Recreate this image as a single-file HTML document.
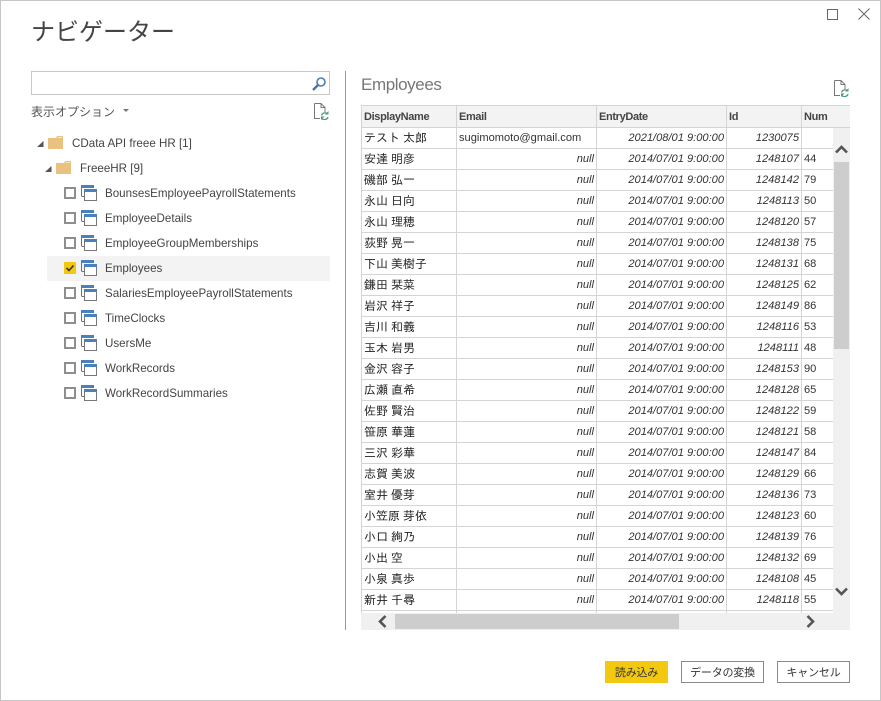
<!DOCTYPE html>
<html lang="ja"><head><meta charset="utf-8"><style>
html,body{margin:0;padding:0;background:#fff}
body{width:881px;height:701px;position:relative;overflow:hidden;font-family:"Liberation Sans","IPAGothic",sans-serif;font-size:12px;color:#3c3c3c}
.a{position:absolute}
.frame{left:0;top:0;width:879px;height:699px;border:1px solid #c6c6c6}
.title{left:31px;top:13px;font:24px/34px "Noto Sans CJK JP",sans-serif;color:#444;white-space:nowrap}
.search{left:31px;top:71px;width:297px;height:22px;border:1px solid #c8c8c8}
.divider{left:345px;top:71px;width:1px;height:559px;background:#9a9a9a}
.opt{left:31px;top:103px;font:12px/17px "Noto Sans CJK JP",sans-serif;color:#555;white-space:nowrap}
.tree{white-space:nowrap;line-height:16px;color:#444;font-size:11.6px}
.cb{left:64px;width:8px;height:8px;border:2px solid #8e8e8e;background:#fff}
.sel{left:47px;top:256px;width:283px;height:25px;background:#f3f3f3}
.h2{left:361px;top:73px;font-size:17px;letter-spacing:-.4px;line-height:24px;color:#777}
table{position:absolute;left:0;top:0;border-collapse:separate;border-spacing:0;table-layout:fixed;width:489px;border-left:1px solid #d4d4d4;border-top:1px solid #d4d4d4}
td,th{box-sizing:border-box;height:21px;padding:0 2px;border-right:1px solid #d4d4d4;border-bottom:1px solid #d4d4d4;white-space:nowrap;overflow:hidden;font-size:11.1px;line-height:20px;color:#333;font-weight:normal;text-align:left}
th{height:22px;background:#f3f3f3;font-weight:bold;color:#444;font-size:11px;letter-spacing:-.35px}
td:nth-child(1){font-family:"IPAGothic",sans-serif;font-size:12px;word-spacing:-3px;color:#222}
td:nth-child(2),td:nth-child(3),td:nth-child(4){text-align:right;font-style:italic}
td.e{text-align:left;font-style:normal}
td:last-child,th:last-child{border-right:0}
.btn{box-sizing:border-box;top:661px;height:22px;text-align:center;font:11px/20px "Noto Sans CJK JP",sans-serif;letter-spacing:-.2px;color:#333;border:1px solid #8a8a8a;background:#fff}
</style></head><body>
<div class="a frame"></div>
<div class="a title">ナビゲーター</div>
<svg class="a" style="left:827px;top:9px" width="11" height="11"><rect x=".5" y=".5" width="10" height="10" fill="none" stroke="#666"/></svg>
<svg class="a" style="left:858px;top:8px" width="12" height="12"><path d="M.5.5l11 11M11.500.5l-11 11" stroke="#666" fill="none"/></svg>

<div class="a search"></div>
<svg class="a" style="left:311px;top:76px" width="16" height="16"><circle cx="10" cy="6" r="4" fill="none" stroke="#4a7db5" stroke-width="1.6"/><path d="M7 9L2 14" stroke="#3f75b0" stroke-width="2.4"/></svg>
<div class="a opt">表示オプション</div>
<svg class="a" style="left:123px;top:109px" width="6" height="4"><path d="M0 0h6L3 3z" fill="#777"/></svg>
<svg class="a" style="left:313px;top:102px" width="16" height="18"><path d="M1.500 1.500H8l4 4V10M12 5.500H8V1.500M7 16.500H1.500V1.500" fill="none" stroke="#777"/><path d="M8.500 13.500a3.500 3.500 0 0 1 6-1.500M15 15a3.500 3.500 0 0 1-6 1.500" fill="none" stroke="#4f9a7d" stroke-width="1.300"/><path d="M15.500 9v3.500h-3.500zM8 18v-3.500h3.500z" fill="#4f9a7d"/></svg>

<svg class="a" style="left:37px;top:140px" width="8" height="8"><path d="M6.500 1v6H0z" fill="#555"/></svg>
<svg class="a" style="left:48px;top:136px" width="16" height="14"><path d="M0 2h8l1-2h6v13H0z" fill="#e8c27e"/><path d="M9.500 1.500H14" stroke="#f6e6c8"/></svg>
<div class="a tree" style="left:72px;top:136px">CData API freee HR [1]</div>
<svg class="a" style="left:45px;top:165px" width="8" height="8"><path d="M6.500 1v6H0z" fill="#555"/></svg>
<svg class="a" style="left:56px;top:161px" width="16" height="14"><path d="M0 2h8l1-2h6v13H0z" fill="#e8c27e"/><path d="M9.500 1.500H14" stroke="#f6e6c8"/></svg>
<div class="a tree" style="left:80px;top:161px">FreeeHR [9]</div>

<div class="a sel"></div>
<svg width="0" height="0" style="position:absolute"><defs><g id="t"><path d="M.5 11V1" stroke="#6f6f6f" fill="none"/><path d="M.5 11.500H3" stroke="#6f6f6f" fill="none"/><rect x="0" y="0" width="13" height="3" fill="#4a80bb"/><rect x="3" y="4" width="13" height="12" fill="#fff"/><rect x="3.500" y="4.500" width="12" height="11" fill="none" stroke="#777"/><rect x="3" y="4" width="13" height="3" fill="#4a80bb"/></g></defs></svg>

<div class="a cb" style="top:187px"></div><svg class="a" style="left:81px;top:185px" width="16" height="16"><use href="#t"/></svg><div class="a tree" style="left:105px;top:186px">BounsesEmployeePayrollStatements</div>
<div class="a cb" style="top:212px"></div><svg class="a" style="left:81px;top:210px" width="16" height="16"><use href="#t"/></svg><div class="a tree" style="left:105px;top:211px">EmployeeDetails</div>
<div class="a cb" style="top:237px"></div><svg class="a" style="left:81px;top:235px" width="16" height="16"><use href="#t"/></svg><div class="a tree" style="left:105px;top:236px">EmployeeGroupMemberships</div>
<div class="a" style="left:64px;top:262px;width:12px;height:12px;background:#f2c811"></div><svg class="a" style="left:64px;top:262px" width="12" height="12"><path d="M2.500 6l2.500 2.500L9.500 3.500" fill="none" stroke="#333" stroke-width="1.600"/></svg><svg class="a" style="left:81px;top:260px" width="16" height="16"><use href="#t"/></svg><div class="a tree" style="left:105px;top:261px">Employees</div>
<div class="a cb" style="top:287px"></div><svg class="a" style="left:81px;top:285px" width="16" height="16"><use href="#t"/></svg><div class="a tree" style="left:105px;top:286px">SalariesEmployeePayrollStatements</div>
<div class="a cb" style="top:312px"></div><svg class="a" style="left:81px;top:310px" width="16" height="16"><use href="#t"/></svg><div class="a tree" style="left:105px;top:311px">TimeClocks</div>
<div class="a cb" style="top:337px"></div><svg class="a" style="left:81px;top:335px" width="16" height="16"><use href="#t"/></svg><div class="a tree" style="left:105px;top:336px">UsersMe</div>
<div class="a cb" style="top:362px"></div><svg class="a" style="left:81px;top:360px" width="16" height="16"><use href="#t"/></svg><div class="a tree" style="left:105px;top:361px">WorkRecords</div>
<div class="a cb" style="top:387px"></div><svg class="a" style="left:81px;top:385px" width="16" height="16"><use href="#t"/></svg><div class="a tree" style="left:105px;top:386px">WorkRecordSummaries</div>

<div class="a divider"></div>
<div class="a h2">Employees</div>
<svg class="a" style="left:833px;top:79px" width="16" height="18"><path d="M1.500 1.500H8l4 4V10M12 5.500H8V1.500M7 16.500H1.500V1.500" fill="none" stroke="#777"/><path d="M8.500 13.500a3.500 3.500 0 0 1 6-1.500M15 15a3.500 3.500 0 0 1-6 1.500" fill="none" stroke="#4f9a7d" stroke-width="1.300"/><path d="M15.500 9v3.500h-3.500zM8 18v-3.500h3.500z" fill="#4f9a7d"/></svg>

<div class="a" style="left:361px;top:105px;width:489px;height:508px;overflow:hidden">
<table><colgroup><col style="width:95px"><col style="width:140px"><col style="width:130px"><col style="width:75px"><col style="width:48px"></colgroup>
<tr><th>DisplayName</th><th>Email</th><th>EntryDate</th><th>Id</th><th>Num</th></tr>
<tr><td>テスト 太郎</td><td class="e">sugimomoto@gmail.com</td><td>2021/08/01 9:00:00</td><td>1230075</td><td class="e"></td></tr>
<tr><td>安達 明彦</td><td>null</td><td>2014/07/01 9:00:00</td><td>1248107</td><td class="e">44</td></tr>
<tr><td>磯部 弘一</td><td>null</td><td>2014/07/01 9:00:00</td><td>1248142</td><td class="e">79</td></tr>
<tr><td>永山 日向</td><td>null</td><td>2014/07/01 9:00:00</td><td>1248113</td><td class="e">50</td></tr>
<tr><td>永山 理穂</td><td>null</td><td>2014/07/01 9:00:00</td><td>1248120</td><td class="e">57</td></tr>
<tr><td>荻野 晃一</td><td>null</td><td>2014/07/01 9:00:00</td><td>1248138</td><td class="e">75</td></tr>
<tr><td>下山 美樹子</td><td>null</td><td>2014/07/01 9:00:00</td><td>1248131</td><td class="e">68</td></tr>
<tr><td>鎌田 栞菜</td><td>null</td><td>2014/07/01 9:00:00</td><td>1248125</td><td class="e">62</td></tr>
<tr><td>岩沢 祥子</td><td>null</td><td>2014/07/01 9:00:00</td><td>1248149</td><td class="e">86</td></tr>
<tr><td>吉川 和義</td><td>null</td><td>2014/07/01 9:00:00</td><td>1248116</td><td class="e">53</td></tr>
<tr><td>玉木 岩男</td><td>null</td><td>2014/07/01 9:00:00</td><td>1248111</td><td class="e">48</td></tr>
<tr><td>金沢 容子</td><td>null</td><td>2014/07/01 9:00:00</td><td>1248153</td><td class="e">90</td></tr>
<tr><td>広瀬 直希</td><td>null</td><td>2014/07/01 9:00:00</td><td>1248128</td><td class="e">65</td></tr>
<tr><td>佐野 賢治</td><td>null</td><td>2014/07/01 9:00:00</td><td>1248122</td><td class="e">59</td></tr>
<tr><td>笹原 華蓮</td><td>null</td><td>2014/07/01 9:00:00</td><td>1248121</td><td class="e">58</td></tr>
<tr><td>三沢 彩華</td><td>null</td><td>2014/07/01 9:00:00</td><td>1248147</td><td class="e">84</td></tr>
<tr><td>志賀 美波</td><td>null</td><td>2014/07/01 9:00:00</td><td>1248129</td><td class="e">66</td></tr>
<tr><td>室井 優芽</td><td>null</td><td>2014/07/01 9:00:00</td><td>1248136</td><td class="e">73</td></tr>
<tr><td>小笠原 芽依</td><td>null</td><td>2014/07/01 9:00:00</td><td>1248123</td><td class="e">60</td></tr>
<tr><td>小口 絢乃</td><td>null</td><td>2014/07/01 9:00:00</td><td>1248139</td><td class="e">76</td></tr>
<tr><td>小出 空</td><td>null</td><td>2014/07/01 9:00:00</td><td>1248132</td><td class="e">69</td></tr>
<tr><td>小泉 真歩</td><td>null</td><td>2014/07/01 9:00:00</td><td>1248108</td><td class="e">45</td></tr>
<tr><td>新井 千尋</td><td>null</td><td>2014/07/01 9:00:00</td><td>1248118</td><td class="e">55</td></tr>
<tr><td>&nbsp;</td><td></td><td></td><td></td><td></td></tr>
</table>
</div>

<div class="a" style="left:833px;top:128px;width:17px;height:485px;background:#f0f0f0"></div>
<div class="a" style="left:834px;top:162px;width:15px;height:187px;background:#cdcdcd"></div>
<svg class="a" style="left:835px;top:144px" width="13" height="10"><path d="M1 8.500L6.500 3l5.500 5.500" fill="none" stroke="#555" stroke-width="2.600"/></svg>
<svg class="a" style="left:835px;top:586px" width="13" height="10"><path d="M1 2.500L6.500 8 12 2.500" fill="none" stroke="#555" stroke-width="2.600"/></svg>
<div class="a" style="left:361px;top:613px;width:489px;height:17px;background:#f0f0f0"></div>
<div class="a" style="left:395px;top:614px;width:284px;height:15px;background:#cdcdcd"></div>
<svg class="a" style="left:377px;top:615px" width="10" height="13"><path d="M8.500 1L3 6.500 8.500 12" fill="none" stroke="#555" stroke-width="2.600"/></svg>
<svg class="a" style="left:806px;top:615px" width="10" height="13"><path d="M1.500 1L7 6.500 1.500 12" fill="none" stroke="#555" stroke-width="2.600"/></svg>

<div class="a btn" style="left:605px;width:63px;background:#f2c811;border-color:#f2c811">読み込み</div>
<div class="a btn" style="left:681px;width:83px">データの変換</div>
<div class="a btn" style="left:777px;width:73px">キャンセル</div>
</body></html>
